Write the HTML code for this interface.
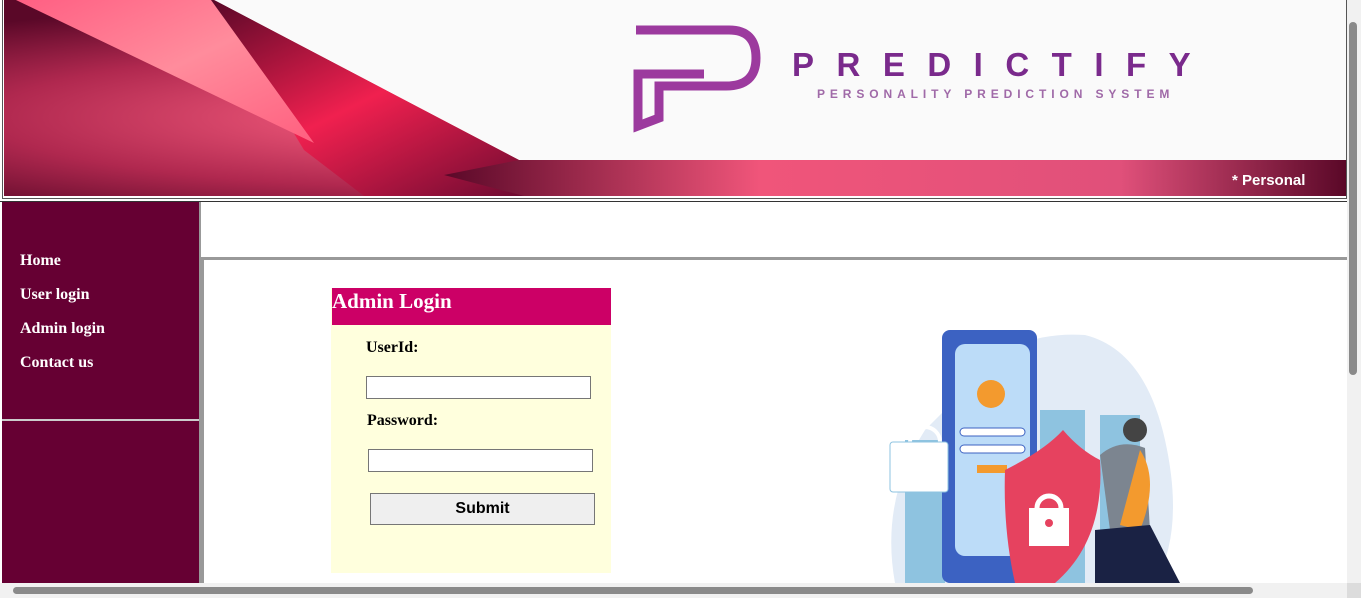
<!DOCTYPE html>
<html><head><meta charset="utf-8"><style>
*{margin:0;padding:0;box-sizing:border-box}
body{width:1361px;height:598px;overflow:hidden;background:#fff;font-family:"Liberation Serif",serif;position:relative}
.abs{position:absolute}
.nav a{display:block;color:#fff;font-weight:bold;font-size:16px;text-decoration:none;position:absolute;left:20px}
label{font-weight:bold;font-size:16px;position:absolute}
input{position:absolute;height:23px;border:1px solid #767676;background:#fff}
</style></head><body>
<!-- header -->
<div class="abs" style="left:2px;top:0;width:1345px;height:199px;border:1px solid #555;border-top:none"></div>
<svg class="abs" style="left:4px;top:0" width="1342" height="196">
<defs>
<linearGradient id="band" x1="0" x2="1"><stop offset="0" stop-color="#5a0828"/><stop offset=".35" stop-color="#f0557a"/><stop offset=".75" stop-color="#e0507a"/><stop offset="1" stop-color="#5a0828"/></linearGradient>
<radialGradient id="lg" cx=".35" cy=".6" r=".6"><stop offset="0" stop-color="#ff6585"/><stop offset=".6" stop-color="#b0284f"/><stop offset="1" stop-color="#5a0828"/></radialGradient>
<linearGradient id="tri" x1="0" y1="0" x2="1" y2="1"><stop offset="0" stop-color="#ff5f83"/><stop offset=".5" stop-color="#ff8c9c"/><stop offset="1" stop-color="#ff5f7f"/></linearGradient>
<linearGradient id="mid" x1="0" y1="0" x2="1" y2="1"><stop offset="0" stop-color="#5a0828"/><stop offset=".45" stop-color="#f0204f"/><stop offset="1" stop-color="#50062a"/></linearGradient>
</defs>
<rect width="1342" height="196" fill="#fafafa"/>
<polygon points="0,0 210,0 515,160 1342,160 1342,196 0,196" fill="url(#lg)"/>
<polygon points="210,0 515,160 600,196 360,196 300,150" fill="url(#mid)"/>
<polygon points="515,160 1342,160 1342,196 520,196 440,175" fill="url(#band)"/>
<polygon points="12,0 207,0 310,143" fill="url(#tri)"/>
<!-- logo -->
<g fill="none" stroke="#9c3a9e" stroke-width="9" stroke-linejoin="miter">
<path d="M632,30 L725,30 Q752,30 752,58 Q752,86 722,86 L655,86 L655,118 L634,126 L634,74 L700,74"/>
</g>
<text x="788" y="76" font-family="Liberation Sans,sans-serif" font-size="33" font-weight="bold" fill="#7a2a8c" letter-spacing="22.5">PREDICTIFY</text>
<text x="813" y="98" font-family="Liberation Sans,sans-serif" font-size="12" font-weight="bold" fill="#a06aa8" letter-spacing="4.9">PERSONALITY PREDICTION SYSTEM</text>
<text x="1228" y="185" font-family="Liberation Sans,sans-serif" font-size="15" font-weight="bold" fill="#fff">* Personal</text>
</svg>
<div class="abs" style="left:0;top:201px;width:1347px;height:1px;background:#333"></div>
<!-- sidebar -->
<div class="abs" style="left:2px;top:202px;width:197px;height:381px;background:#660033"></div>
<div class="abs" style="left:2px;top:419px;width:197px;height:2px;background:#ccc"></div>
<div class="abs" style="left:199px;top:202px;width:2px;height:381px;background:#999"></div>
<div class="nav"><a style="top:252px">Home</a><a style="top:286px">User login</a><a style="top:320px">Admin login</a><a style="top:354px">Contact us</a></div>
<!-- main -->
<div class="abs" style="left:201px;top:257px;width:1146px;height:3px;background:#999"></div>
<div class="abs" style="left:201px;top:257px;width:3px;height:326px;background:#999"></div>
<!-- form -->
<div class="abs" style="left:331px;top:288px;width:280px;height:285px;background:#ffffdd"></div>
<div class="abs" style="left:332px;top:288px;width:279px;height:37px;background:#cc0066;color:#fff;font-weight:bold;font-size:21px;line-height:26px">Admin Login</div>
<label style="left:366px;top:339px">UserId:</label>
<input style="left:366px;top:376px;width:225px">
<label style="left:367px;top:412px">Password:</label>
<input style="left:368px;top:449px;width:225px">
<div class="abs" style="left:370px;top:493px;width:225px;height:32px;background:#efefef;border:1px solid #767676;font-family:'Liberation Sans',sans-serif;font-weight:bold;font-size:16px;text-align:center;line-height:30px">Submit</div>
<!-- illustration -->
<svg class="abs" style="left:885px;top:330px" width="300" height="253">
<path d="M80,60 Q120,0 200,5 Q260,20 280,110 Q300,200 270,253 L10,253 Q-5,170 40,100 Z" fill="#e2ebf6"/>
<rect x="20" y="110" width="40" height="143" fill="#8ec3e0"/>
<rect x="155" y="80" width="45" height="173" fill="#8ec3e0"/>
<rect x="215" y="85" width="40" height="168" fill="#8ec3e0"/>
<rect x="57" y="0" width="95" height="253" rx="8" fill="#3c62c2"/>
<rect x="70" y="14" width="75" height="212" rx="10" fill="#bcdcf8"/>
<circle cx="106" cy="64" r="14" fill="#f39a2e"/>
<rect x="75" y="98" width="65" height="8" rx="4" fill="#fff" stroke="#3c62c2"/>
<rect x="75" y="115" width="65" height="8" rx="4" fill="#fff" stroke="#3c62c2"/>
<rect x="92" y="135" width="30" height="8" fill="#f39a2e"/>
<path d="M25,112 a15,15 0 0 1 30,0" fill="none" stroke="#fff" stroke-width="4"/>
<rect x="5" y="112" width="58" height="50" rx="3" fill="#fff" stroke="#8ec3e0"/>
<path d="M120,140 Q160,120 178,100 Q195,120 215,130 Q220,210 170,253 L130,253 Q118,200 120,140Z" fill="#e6425f"/>
<path d="M152,178 a12,12 0 0 1 24,0" fill="none" stroke="#fff" stroke-width="5"/>
<rect x="144" y="178" width="40" height="38" fill="#fff"/>
<circle cx="164" cy="193" r="4" fill="#e6425f"/>
<circle cx="250" cy="100" r="12" fill="#444"/>
<path d="M215,125 Q235,108 260,118 L265,200 L225,200 Z" fill="#7c8590"/>
<path d="M255,120 Q275,150 255,200 L235,195 Z" fill="#f39a2e"/>
<path d="M210,200 L265,195 L295,253 L210,253 Z" fill="#1a2244"/>
</svg>
<!-- scrollbars -->
<div class="abs" style="left:1347px;top:0;width:14px;height:583px;background:#f1f1f1"></div>
<div class="abs" style="left:1349px;top:22px;width:8px;height:353px;background:#8a8a8a;border-radius:4px"></div>
<div class="abs" style="left:0;top:583px;width:1361px;height:15px;background:#f1f1f1"></div>
<div class="abs" style="left:13px;top:587px;width:1240px;height:7px;background:#8a8a8a;border-radius:4px"></div>
<div class="abs" style="left:1347px;top:583px;width:14px;height:15px;background:#dcdcdc"></div>
</body></html>
